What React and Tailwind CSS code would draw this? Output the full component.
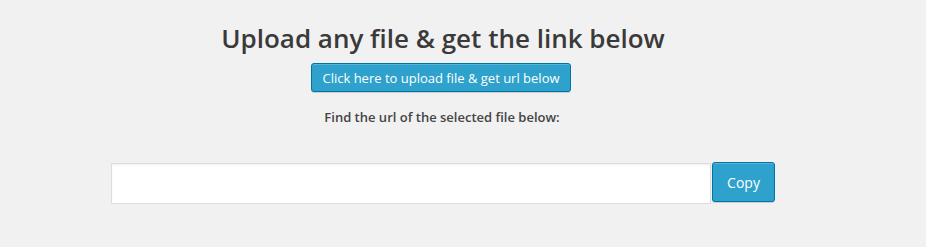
export default function App() {
  return (
    <div className="min-h-screen w-full bg-[#f1f1f1] font-['Open_Sans',sans-serif] text-[#444]">
      <div className="ml-[111px] w-[664px] pt-[20px] flex flex-col items-center">
        <h1 className="text-[26px] leading-[36px] font-semibold text-[#3a3a3a]">
          Upload any file &amp; get the link below
        </h1>
        <button className="mt-[7px] mr-[4px] h-[29px] px-[10px] rounded-[3px] border border-[#0074a2] bg-[#2ea2cc] text-[13px] leading-[26px] text-white shadow-[inset_0_1px_0_rgba(120,200,230,0.5),0_1px_0_rgba(0,0,0,0.15)]">
          Click here to upload file &amp; get url below
        </button>
        <p className="mt-[16px] mr-[2px] text-[13px] leading-[18px] font-semibold text-[#444]">
          Find the url of the selected file below:
        </p>
        <div className="mt-[36px] w-full flex items-start">
          <input
            type="text"
            className="mt-px w-[600px] h-[41px] border border-[#ddd] bg-white shadow-[inset_0_1px_2px_rgba(0,0,0,0.07)] outline-none px-2"
          />
          <button className="ml-[1px] w-[63px] h-[40px] rounded-[3px] border border-[#0074a2] bg-[#2ea2cc] text-[14px] text-white shadow-[inset_0_1px_0_rgba(120,200,230,0.5),0_1px_0_rgba(0,0,0,0.15)]">
            Copy
          </button>
        </div>
      </div>
    </div>
  );
}
